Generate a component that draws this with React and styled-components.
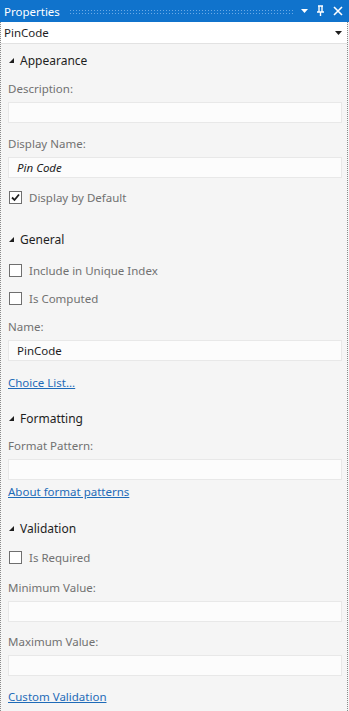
import styled, { createGlobalStyle } from "styled-components";

const Global = createGlobalStyle`
  html, body { margin: 0; padding: 0; background: #f5f5f5; }
  body { font-family: "Segoe UI", "Noto Sans", "Liberation Sans", sans-serif; font-size: 11.5px; }
`;

const Panel = styled.div`
  width: 349px;
  height: 711px;
  background: #f5f5f5;
  overflow: hidden;
  display: flex;
  flex-direction: column;
`;

const TitleBar = styled.div`
  height: 22px;
  background: #1073cc;
  color: #fff;
  display: flex;
  align-items: center;
  padding: 0 6px 0 4px;
  font-size: 11.5px;
  box-sizing: border-box;
`;

const Grip = styled.div`
  flex: 1;
  height: 5px;
  margin: 1px 8px 0 9px;
  background-image: radial-gradient(circle, #6aaae6 0.7px, transparent 0.9px);
  background-size: 3px 3px;
`;

const TitleIcons = styled.div`
  display: flex;
  align-items: center;
  gap: 8px;
`;

const Body = styled.div`
  flex: 1;
  border-left: 1px dotted #8a8a8a;
  border-right: 1px dotted #8a8a8a;
  margin-right: 1px;
  display: flex;
  flex-direction: column;
`;

const Combo = styled.div`
  height: 22px;
  background: #fff;
  border-bottom: 1px solid #e2e2e2;
  display: flex;
  align-items: center;
  justify-content: space-between;
  padding: 0 5px 0 3px;
  color: #1e1e1e;
  box-sizing: border-box;
`;

const Content = styled.div`
  padding: 0 5px 0 7px;
  display: flex;
  flex-direction: column;
`;

const Header = styled.div`
  display: flex;
  align-items: center;
  height: 20px;
  margin-top: ${(p) => p.$top}px;
  color: #1e1e1e;
  font-size: 12px;
  svg { margin: 1px 6px 0 1px; }
`;

const Label = styled.div`
  height: 16px;
  line-height: 16px;
  color: #717171;
  margin-top: ${(p) => p.$top}px;
`;

const Input = styled.div`
  height: 21px;
  box-sizing: border-box;
  margin-top: 5px;
  background: #fcfcfc;
  border: 1px solid #e8e8e8;
  padding: 0 8px;
  display: flex;
  align-items: center;
  color: #1e1e1e;
  font-style: ${(p) => (p.$italic ? "italic" : "normal")};
`;

const CheckRow = styled.div`
  display: flex;
  align-items: center;
  height: 20px;
  margin-top: ${(p) => p.$top}px;
  color: #717171;
  gap: 7px;
`;

const Box = styled.span`
  width: 13px;
  height: 13px;
  box-sizing: border-box;
  border: 1px solid #6f6f6f;
  background: #fff;
  display: flex;
  align-items: center;
  justify-content: center;
  margin-left: 1px;
`;

const Link = styled.a`
  display: block;
  height: 16px;
  line-height: 16px;
  margin-top: ${(p) => p.$top}px;
  color: #1e6bb8;
  text-decoration: underline;
  align-self: flex-start;
`;

const Triangle = () => (
  <svg width="5" height="5" viewBox="0 0 5 5">
    <polygon points="5,0 5,5 0,5" fill="#1e1e1e" />
  </svg>
);

const Check = ({ checked }) => (
  <Box>
    {checked && (
      <svg width="11" height="11" viewBox="0 0 11 11">
        <path d="M2 5.5 L4.5 8 L9 2.5" stroke="#1e1e1e" strokeWidth="1.8" fill="none" />
      </svg>
    )}
  </Box>
);

const Caret = ({ color }) => (
  <svg width="7" height="4" viewBox="0 0 7 4">
    <polygon points="0,0 7,0 3.5,4" fill={color} />
  </svg>
);

export default function App() {
  return (
    <Panel>
      <Global />
      <TitleBar>
        <span>Properties</span>
        <Grip />
        <TitleIcons>
          <Caret color="#fff" />
          <svg width="9" height="12" viewBox="0 0 9 12">
            <path d="M2 1 H7 M3 1 V7 M6 1 V7 M1 7 H8 M4.5 7 V11" stroke="#fff" strokeWidth="1.4" fill="none" />
          </svg>
          <svg width="10" height="10" viewBox="0 0 10 10">
            <path d="M1 1 L9 9 M9 1 L1 9" stroke="#fff" strokeWidth="1.6" />
          </svg>
        </TitleIcons>
      </TitleBar>
      <Body>
        <Combo>
          <span>PinCode</span>
          <Caret color="#1e1e1e" />
        </Combo>
        <Content>
          <Header $top={6}><Triangle />Appearance</Header>
          <Label $top={11}>Description:</Label>
          <Input />
          <Label $top={13}>Display Name:</Label>
          <Input $italic>Pin Code</Input>
          <CheckRow $top={9}><Check checked />Display by Default</CheckRow>

          <Header $top={22}><Triangle />General</Header>
          <CheckRow $top={11}><Check />Include in Unique Index</CheckRow>
          <CheckRow $top={8}><Check />Is Computed</CheckRow>
          <Label $top={11}>Name:</Label>
          <Input>PinCode</Input>
          <Link $top={14}>Choice List...</Link>

          <Header $top={17}><Triangle />Formatting</Header>
          <Label $top={10}>Format Pattern:</Label>
          <Input />
          <Link $top={4}>About format patterns</Link>

          <Header $top={18}><Triangle />Validation</Header>
          <CheckRow $top={9}><Check />Is Required</CheckRow>
          <Label $top={13}>Minimum Value:</Label>
          <Input />
          <Label $top={12}>Maximum Value:</Label>
          <Input />
          <Link $top={13}>Custom Validation</Link>
        </Content>
      </Body>
    </Panel>
  );
}
